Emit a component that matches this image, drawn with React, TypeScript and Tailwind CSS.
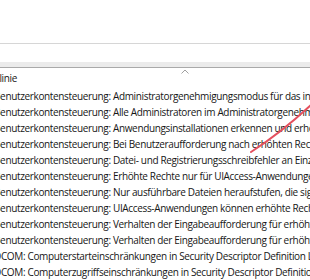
export default function App() {
  const rows = [
    "Benutzerkontensteuerung: Administratorgenehmigungsmodus für das integrierte Administratorkonto",
    "Benutzerkontensteuerung: Alle Administratoren im Administratorgenehmigungsmodus ausführen",
    "Benutzerkontensteuerung: Anwendungsinstallationen erkennen und erhöhte Rechte anfordern",
    "Benutzerkontensteuerung: Bei Benutzeraufforderung nach erhöhten Rechten zum sicheren Desktop wechseln",
    "Benutzerkontensteuerung: Datei- und Registrierungsschreibfehler an Einzelbenutzerstandorte virtualisieren",
    "Benutzerkontensteuerung: Erhöhte Rechte nur für UIAccess-Anwendungen, die an sicheren Orten installiert sind",
    "Benutzerkontensteuerung: Nur ausführbare Dateien heraufstufen, die signiert und überprüft sind",
    "Benutzerkontensteuerung: UIAccess-Anwendungen können erhöhte Rechte ohne sicheren Desktop anfordern",
    "Benutzerkontensteuerung: Verhalten der Eingabeaufforderung für erhöhte Rechte für Administratoren",
    "Benutzerkontensteuerung: Verhalten der Eingabeaufforderung für erhöhte Rechte für Standardbenutzer",
    "DCOM: Computerstarteinschränkungen in Security Descriptor Definition Language (SDDL)",
    "DCOM: Computerzugriffseinschränkungen in Security Descriptor Definition Language (SDDL)",
  ];

  return (
    <div className="relative w-[310px] h-[280px] overflow-hidden bg-white font-['Open_Sans',sans-serif] text-[10px] tracking-[-0.35px] text-[#161616]">
      {/* top pane */}
      <div className="h-[43px] bg-white" />
      <div className="h-px bg-[#d6d6d6]" />
      <div className="h-[18px] bg-white" />
      <div className="h-[5px] bg-[#ebebeb]" />
      <div className="h-px bg-[#a9a9a9]" />

      {/* column header */}
      <div className="relative h-[20px] flex items-center">
        <span className="ml-[-22px] whitespace-nowrap">Richtlinie</span>
        <svg className="absolute left-[181px] top-[1px]" width="8" height="5" viewBox="0 0 8 5">
          <polyline points="0.5,4.5 4,1 7.5,4.5" fill="none" stroke="#a0a0a0" strokeWidth="1" />
        </svg>
      </div>

      {/* rows */}
      <div className="flex flex-col">
        {rows.map((r, i) => (
          <div key={i} className="h-[16px] flex items-center whitespace-nowrap">
            <span className="ml-[-6px]">{r}</span>
          </div>
        ))}
      </div>

      {/* red annotation stroke */}
      <svg className="absolute left-0 top-0 pointer-events-none" width="310" height="280">
        <path d="M251 152 Q282 132 312 104" fill="none" stroke="#e4505e" strokeWidth="2" strokeLinecap="round" />
      </svg>
    </div>
  );
}
